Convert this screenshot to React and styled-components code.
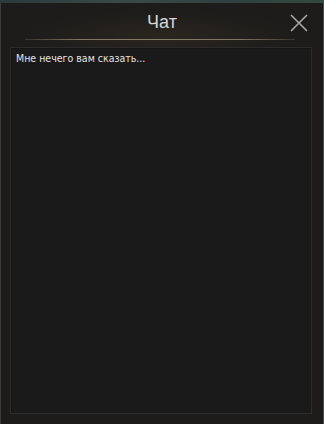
import React from 'react';
import styled, { createGlobalStyle } from 'styled-components';

const GlobalStyle = createGlobalStyle`
html, body {
  margin: 0;
  padding: 0;
  background: #1d1c1a;
}
#root {
  width: 324px;
  height: 424px;
}
`

const Scene = styled.div`
width: 324px;
height: 424px;
display: flex;
flex-direction: column;
background: linear-gradient(90deg, #2b3b3c 0%, #3a4a48 40%, #2f4040 70%, #34493f 100%);
font-family: "Liberation Sans", Arial, sans-serif;
`

const Window = styled.div`
flex: 1;
margin-top: 3px;
display: flex;
flex-direction: column;
background: radial-gradient(ellipse 140px 26px at 50% 34px, #2a2520 0%, #1d1c1a 100%);
border-left: 1px solid #3b3b3b;
border-right: 1px solid #4a4a4a;
box-sizing: border-box;
`

const Header = styled.div`
height: 36px;
display: flex;
align-items: center;
justify-content: center;
position: relative;
`

const Title = styled.h1`
margin: 0;
font-size: 18px;
font-weight: 400;
color: #d6d6d6;
padding-top: 2px;
`

const Close = styled.button`
position: absolute;
right: 13px;
top: 9px;
width: 22px;
height: 22px;
padding: 0;
border: none;
background: transparent;
display: flex;
align-items: center;
justify-content: center;
`

const Divider = styled.div`
height: 1px;
margin: 0 28px 0 24px;
background: linear-gradient(90deg, rgba(120,108,88,0.3) 0%, #7d7462 20%, #857b66 50%, #7d7462 80%, rgba(120,108,88,0.3) 100%);
`

const Body = styled.div`
flex: 1;
display: flex;
padding: 7px 11px 10px 9px;
`

const Messages = styled.div`
flex: 1;
background: #1a1a1a;
border: 1px solid #2c2c2c;
box-shadow: inset 1px 1px 0 #151515;
padding: 4px 5px;
`

const Line = styled.p`
margin: 0;
font-family: "DejaVu Sans Condensed", "DejaVu Sans", sans-serif;
font-size: 10.5px;
color: #e2e2e2;
`

function App() {
  return (
    <Scene>
      <GlobalStyle />
      <Window>
        <Header>
          <Title>Чат</Title>
          <Close>
            <svg width="18" height="18" viewBox="0 0 18 18">
              <path d="M1 1 L17 17 M17 1 L1 17" stroke="#a8a8a8" strokeWidth="1.6" />
            </svg>
          </Close>
        </Header>
        <Divider />
        <Body>
          <Messages>
            <Line>Мне нечего вам сказать...</Line>
          </Messages>
        </Body>
      </Window>
    </Scene>
  );
}

export default App;
